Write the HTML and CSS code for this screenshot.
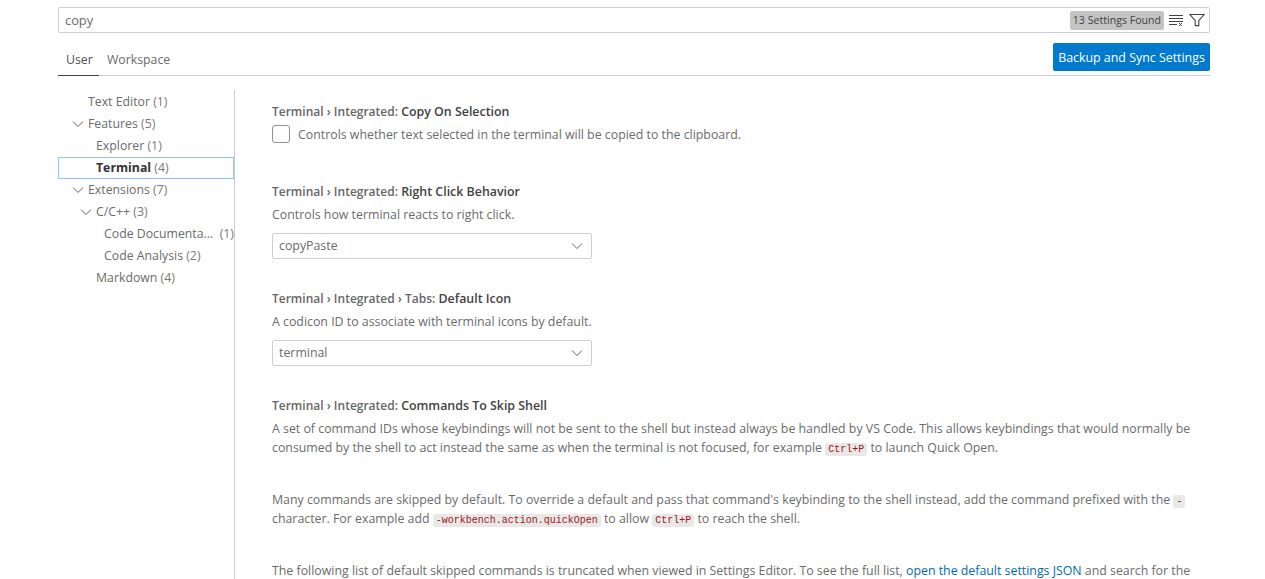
FILE: index.html
```html
<!DOCTYPE html>
<html lang="en">
<head>
<meta charset="utf-8">
<title>Settings</title>
<link rel="stylesheet" href="styles.css">
</head>
<body>
<div class="page">
  <div class="search">
    <span class="query">copy</span>
    <span class="count">13 Settings Found</span>
    <svg class="ico" width="16" height="16" viewBox="0 0 16 16" fill="none" stroke="#424242" stroke-width="1"><path d="M1 3.5h14M1 6.5h14M1 9.5h14M1 12.5h8"/><path d="M11 11l3 3M14 11l-3 3"/></svg>
    <svg class="ico" width="16" height="16" viewBox="0 0 16 16" fill="none" stroke="#424242" stroke-width="1.1"><path d="M1 2.5h14L9.8 8.6v5l-3.6 0v-5z"/></svg>
  </div>
  <div class="tabbar">
    <div class="tabs">
      <span class="tab active">User</span>
      <span class="tab">Workspace</span>
    </div>
    <button class="sync">Backup and Sync Settings</button>
  </div>
  <div class="main">
    <nav class="tree">
      <div class="row l1"><span class="name">Text Editor</span> <span class="n">(1)</span></div>
      <div class="row l1"><svg class="chev" width="12" height="12" viewBox="0 0 12 12"><path d="M1 3.5l5 5 5-5" fill="none" stroke="#616161"/></svg><span class="name">Features</span> <span class="n">(5)</span></div>
      <div class="row l2"><span class="name">Explorer</span> <span class="n">(1)</span></div>
      <div class="row l2 sel"><span class="name strong">Terminal</span> <span class="n">(4)</span></div>
      <div class="row l1"><svg class="chev" width="12" height="12" viewBox="0 0 12 12"><path d="M1 3.5l5 5 5-5" fill="none" stroke="#616161"/></svg><span class="name">Extensions</span> <span class="n">(7)</span></div>
      <div class="row l2"><svg class="chev" width="12" height="12" viewBox="0 0 12 12"><path d="M1 3.5l5 5 5-5" fill="none" stroke="#616161"/></svg><span class="name">C/C++</span> <span class="n">(3)</span></div>
      <div class="row l3 split"><span class="name">Code Documenta...</span> <span class="n">(1)</span></div>
      <div class="row l3"><span class="name">Code Analysis</span> <span class="n">(2)</span></div>
      <div class="row l2"><span class="name">Markdown</span> <span class="n">(4)</span></div>
    </nav>
    <section class="list">
      <article class="setting s1">
        <h3 class="title">Terminal › Integrated: <b>Copy On Selection</b></h3>
        <label class="check"><span class="box"></span><span>Controls whether text selected in the terminal will be copied to the clipboard.</span></label>
      </article>
      <article class="setting s2">
        <h3 class="title">Terminal › Integrated: <b>Right Click Behavior</b></h3>
        <p class="desc">Controls how terminal reacts to right click.</p>
        <div class="select"><span>copyPaste</span><svg width="12" height="12" viewBox="0 0 12 12"><path d="M1 3.5l5 5 5-5" fill="none" stroke="#616161"/></svg></div>
      </article>
      <article class="setting s2">
        <h3 class="title">Terminal › Integrated › Tabs: <b>Default Icon</b></h3>
        <p class="desc">A codicon ID to associate with terminal icons by default.</p>
        <div class="select"><span>terminal</span><svg width="12" height="12" viewBox="0 0 12 12"><path d="M1 3.5l5 5 5-5" fill="none" stroke="#616161"/></svg></div>
      </article>
      <article class="setting">
        <h3 class="title">Terminal › Integrated: <b>Commands To Skip Shell</b></h3>
        <p class="desc para">A set of command IDs whose keybindings will not be sent to the shell but instead always be handled by VS Code. This allows keybindings that would normally be consumed by the shell to act instead the same as when the terminal is not focused, for example <code>Ctrl+P</code> to launch Quick Open.</p>
        <p class="desc para">Many commands are skipped by default. To override a default and pass that command's keybinding to the shell instead, add the command prefixed with the <code>-</code> character. For example add <code>-workbench.action.quickOpen</code> to allow <code>Ctrl+P</code> to reach the shell.</p>
        <p class="desc para">The following list of default skipped commands is truncated when viewed in Settings Editor. To see the full list, <a href="#">open the default settings JSON</a> and search for the</p>
      </article>
    </section>
  </div>
</div>
</body>
</html>
```
FILE: styles.css
```css
* { box-sizing: border-box; }
html, body { margin: 0; height: 579px; overflow: hidden; background: #fff; }
body { font-family: "Open Sans", "Noto Sans", sans-serif; font-size: 12.35px; color: #6b6b6b; }
.page { padding: 7px 55px 0 58px; }

.search { height: 26px; display: flex; align-items: center; gap: 5px; border: 1px solid #cecece; border-radius: 2px; padding: 0 4px 0 6px; }
.query { flex: 1; font-size: 12.8px; color: #6b6b6b; }
.count { background: #c4c4c4; color: #424242; border-radius: 2px; font-size: 10.6px; height: 19px; line-height: 19px; padding: 0 3px; margin-right: -1px; }
.ico { flex: none; }

.tabbar { display: flex; justify-content: space-between; align-items: flex-start; margin-top: 10px; height: 33px; border-bottom: 1px solid #cecece; }
.tabs { display: flex; height: 33px; }
.tab { padding: 8px 8px 0; height: 33px; font-size: 12.3px; color: #6b6b6b; }
.tab.active { color: #505050; border-bottom: 1px solid #424242; width: 41px; }
.sync { height: 28px; border: 0; border-radius: 2px; background: #007acc; color: #fff; font: inherit; font-size: 12.4px; padding: 0 5px; width: 157px; white-space: nowrap; }

.main { display: flex; height: 504px; margin-top: 14px; }
.tree { width: 177px; flex: none; border-right: 1px solid #cecece; padding-top: 1px; }
.row { height: 22px; line-height: 22px; font-size: 12.3px; white-space: nowrap; position: relative; color: #6b6b6b; }
.row .n { opacity: .9; }
.l1 { padding-left: 30px; }
.l2 { padding-left: 38px; }
.l3 { padding-left: 46px; }
.chev { position: absolute; top: 5px; margin-left: -16px; }
.sel { border: 1px solid #90c2f9; line-height: 20px; padding-left: 37px; width: 176px; }
.strong { font-weight: 700; color: #333; }
.split { display: flex; justify-content: space-between; }

.list { flex: 1; padding-left: 37px; min-width: 0; }
.setting { margin: 0; }
.title { margin: 0; font-size: 12px; font-weight: 600; line-height: 20px; color: #666; }
.title b { font-size: 12.4px; font-weight: 600; color: #424242; }
.s1 { padding-top: 12px; height: 92px; }
.s2 { height: 107px; }
.check { display: flex; align-items: center; gap: 8px; height: 22px; margin-top: 1px; }
.box { width: 18px; height: 18px; border: 1px solid #919191; border-radius: 3px; flex: none; }
.desc { margin: 0; font-size: 12.35px; line-height: 20px; }
.s2 .desc { margin-top: 3px; }
.select { width: 320px; height: 26px; margin-top: 8px; border: 1px solid #cecece; border-radius: 2px; display: flex; justify-content: space-between; align-items: center; padding: 0 8px 2px 6px; color: #6b6b6b; }
.select svg { margin-top: 2px; }
.para { line-height: 19px; margin-top: 3px; margin-bottom: 33px; }
code { font-family: "Liberation Mono", monospace; font-size: 10px; line-height: 1; color: #a31515; background: #e8e8e8; border-radius: 3px; padding: 1px 3px; }
a { color: #006ab1; text-decoration: none; }
```
